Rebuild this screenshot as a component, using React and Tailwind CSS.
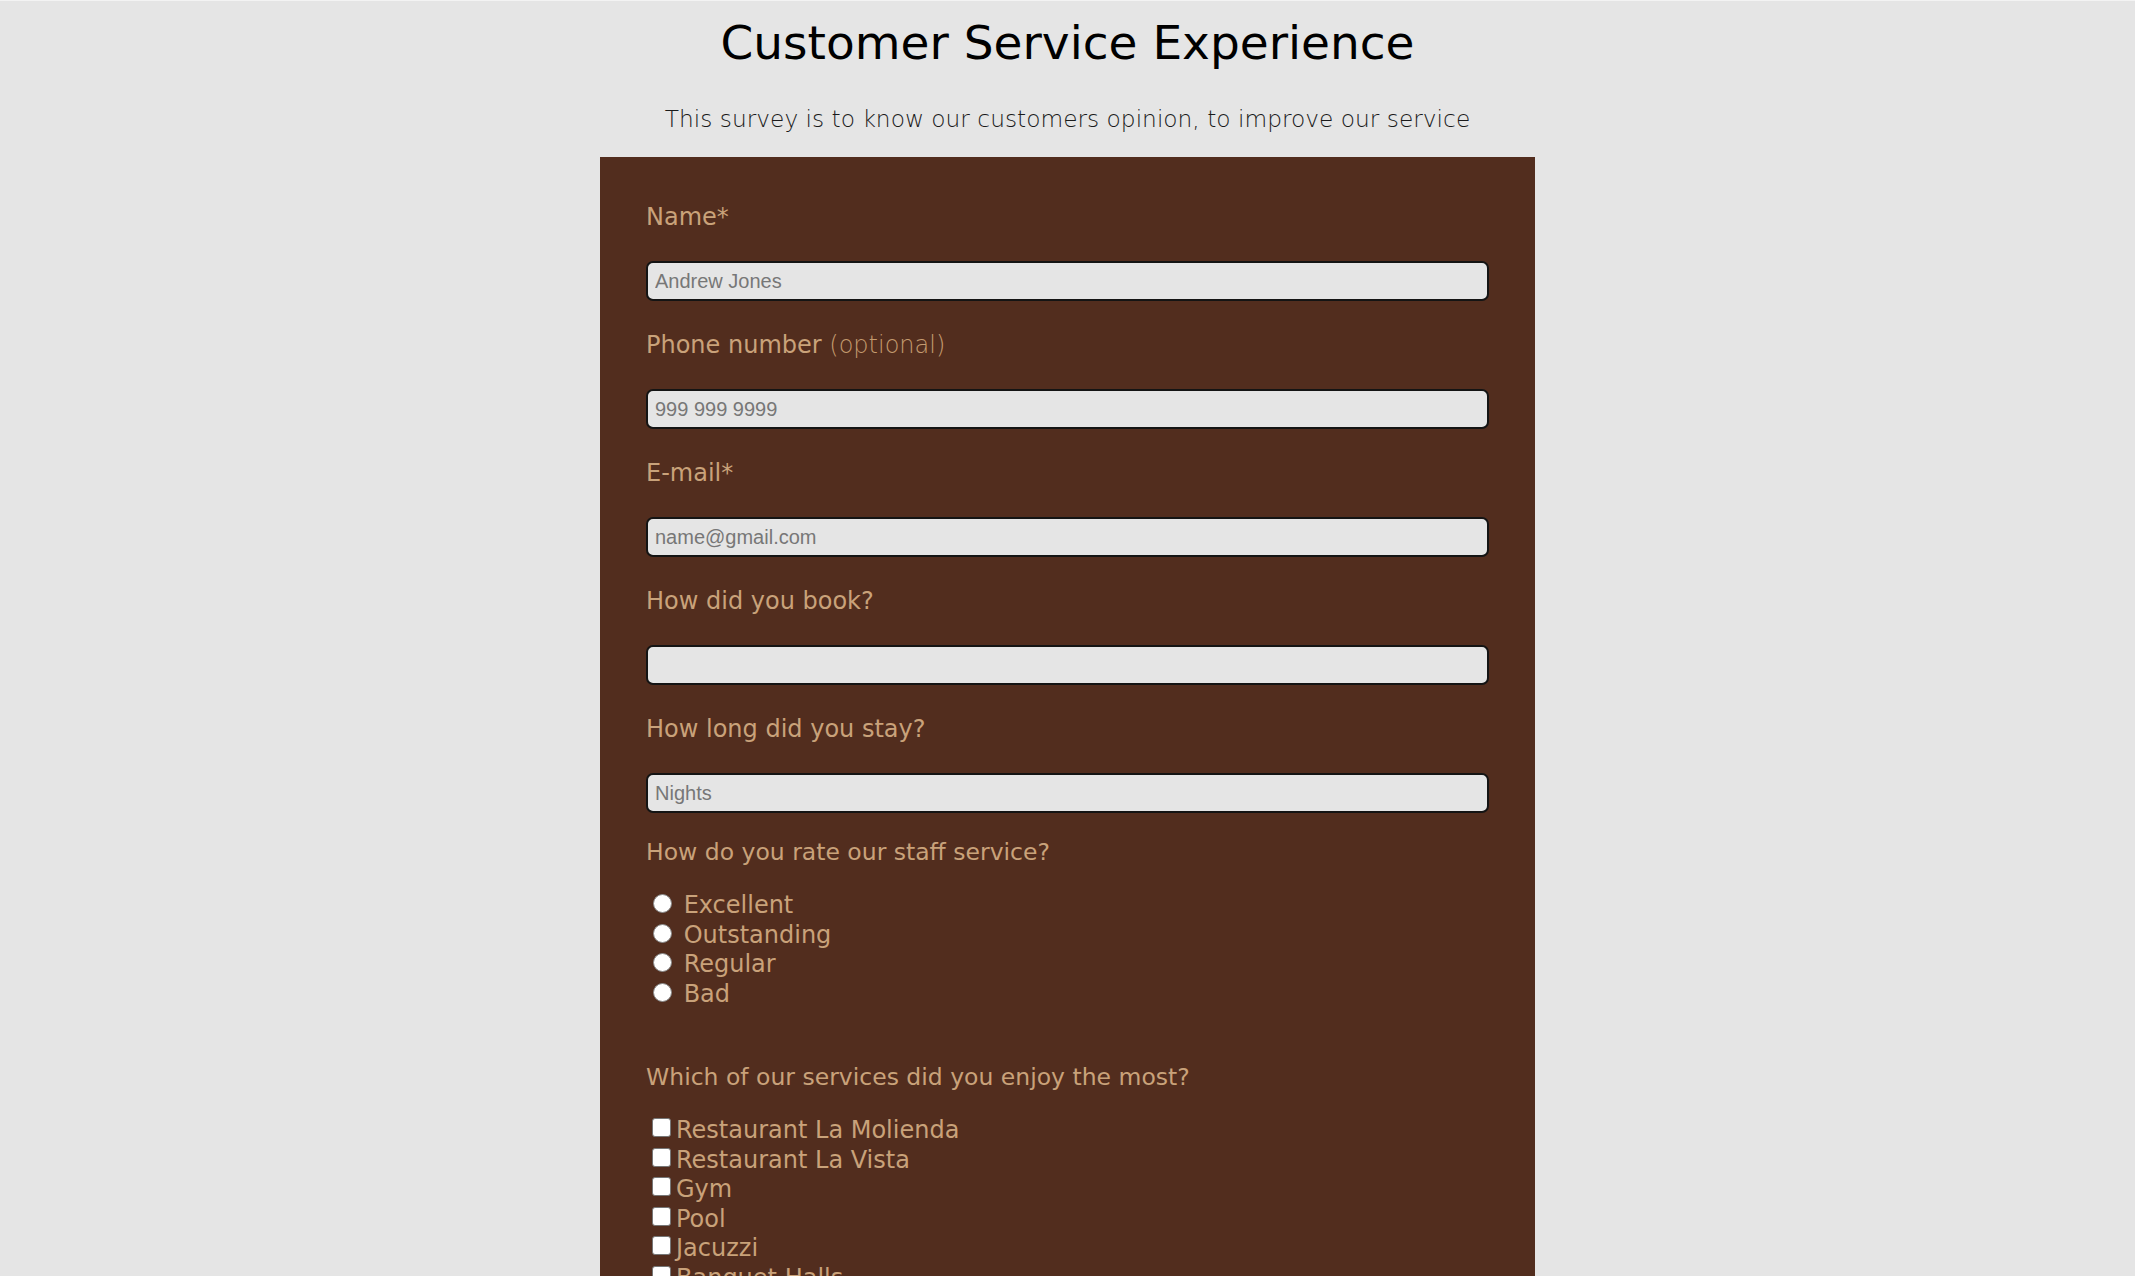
import React from "react";

const field = [
  { label: "Name*", placeholder: "Andrew Jones" },
  { label: "Phone number", optional: true, placeholder: "999 999 9999" },
  { label: "E-mail*", placeholder: "name@gmail.com" },
  { label: "How did you book?", placeholder: "" },
  { label: "How long did you stay?", placeholder: "Nights" },
];

const ratings = ["Excellent", "Outstanding", "Regular", "Bad"];
const services = [
  "Restaurant La Molienda",
  "Restaurant La Vista",
  "Gym",
  "Pool",
  "Jacuzzi",
  "Banquet Halls",
];

export default function App() {
  return (
    <div className="h-screen overflow-hidden bg-[#e5e5e5] border-t border-[#f3f3f3] font-['DejaVu_Sans',sans-serif]">
      <div className="flex flex-col items-center pt-[14px]">
        <h1 className="text-[47px] leading-[56px] font-normal text-black">
          Customer Service Experience
        </h1>
        <p className="mt-[30px] text-[23.3px] leading-[36px] font-extralight text-[#1a1a1a]">
          This survey is to know our customers opinion, to improve our service
        </p>
        <form className="mt-[20px] w-[935px] bg-[#522d1e] px-[46px] pt-[42px] pb-[40px] text-[#c9a27a]">
          <div className="flex flex-col gap-[26px]">
            {field.map((f, i) => (
              <div key={i}>
                <label className="block text-[24px] leading-[36px]">
                  {f.label}
                  {f.optional && <span className="font-extralight text-[#c49b6f]"> (optional)</span>}
                </label>
                <input
                  type="text"
                  placeholder={f.placeholder}
                  className="mt-[26px] block w-full h-[40px] rounded-[7px] border-[2px] border-[#141414] bg-[#e5e5e5] px-[7px] font-['Liberation_Sans',Arial,sans-serif] text-[20px] text-[#333] placeholder:text-[#777] outline-none"
                />
              </div>
            ))}
          </div>

          <div className="mt-[21px]">
            <p className="text-[23.5px] leading-[36px]">How do you rate our staff service?</p>
            <div className="mt-[21px]">
              {ratings.map((r) => (
                <label key={r} className="block text-[24px] leading-[29.5px]">
                  <span className="inline-block align-baseline w-[19px] h-[19px] rounded-full bg-white border border-[#8a8a8a] ml-[7px] mr-[4px]"></span>{" "}
                  {r}
                </label>
              ))}
            </div>
          </div>

          <div className="mt-[50px]">
            <p className="text-[23.5px] leading-[36px]">Which of our services did you enjoy the most?</p>
            <div className="mt-[21px]">
              {services.map((s) => (
                <label key={s} className="block text-[24px] leading-[29.5px]">
                  <span className="inline-block align-baseline w-[19px] h-[19px] rounded-[3px] bg-white border border-[#767676] ml-[6px] mr-[5px] mb-[1px]"></span>
                  {s}
                </label>
              ))}
            </div>
          </div>
        </form>
      </div>
    </div>
  );
}
